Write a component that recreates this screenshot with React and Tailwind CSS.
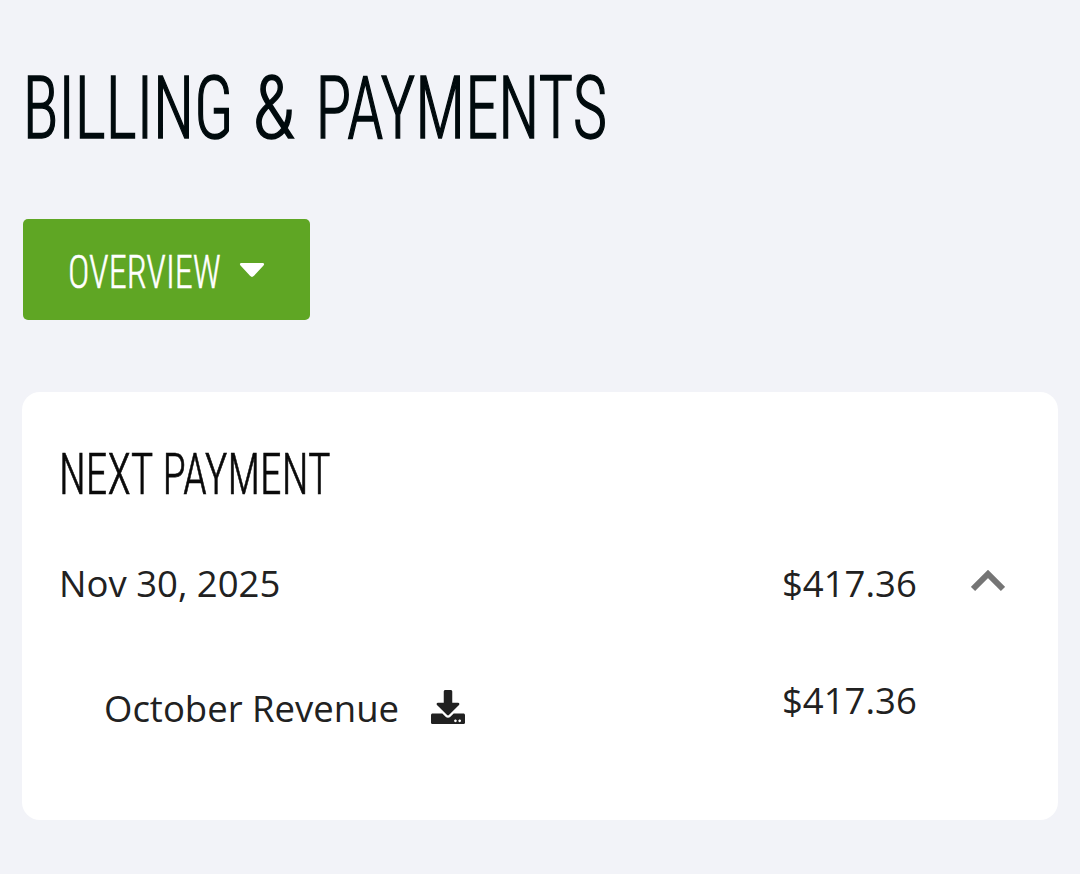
import { FaDownload } from "react-icons/fa";

const payment = {
  date: "Nov 30, 2025",
  total: "$417.36",
  items: [{ name: "October Revenue", amount: "$417.36" }],
};

// Narrow display lettering used for headings and buttons
const CondensedText = ({ children, className }) => (
  <span
    className={`block origin-left whitespace-nowrap font-['Roboto',sans-serif] font-light [font-stretch:75%] ${className}`}
  >
    {children}
  </span>
);

const App = () => {
  return (
    <div className="min-h-screen bg-[#f2f3f8] pt-[62px] px-[22px] font-['Open_Sans',sans-serif] text-[#212121]">
      <h1 className="h-[92px] text-[#000a0d]">
        <CondensedText className="pl-px text-[87px] leading-[92px] [word-spacing:5px] [-webkit-text-stroke:1.5px_currentColor] scale-x-[0.766]">
          BILLING <span className="mr-[11px] inline-block origin-left scale-x-[1.19]">&amp;</span> PAYMENTS
        </CondensedText>
      </h1>

      <button className="mt-[65px] ml-px flex h-[101px] w-[287px] items-center rounded-[5px] bg-[#5fa624] pl-[44px] text-white">
        <div className="w-[172px] pt-[5px] pl-px">
          <CondensedText className="text-[47px] text-left [-webkit-text-stroke:0.5px_currentColor] scale-x-[0.772]">
            OVERVIEW
          </CondensedText>
        </div>
        <svg viewBox="0 0 26 15" className="mt-px h-[15px] w-[26px]" fill="currentColor">
          <path d="M2 0H24Q26 .5 24.500 2.500L15 12.800Q13 15 11 12.800L1.500 2.500Q0 .5 2 0Z" />
        </svg>
      </button>

      <div className="mt-[72px] h-[428px] w-[1036px] rounded-[18px] bg-white px-[38px] pt-[52px]">
        <h2 className="-ml-px h-[60px] text-[#0a0a0a]">
          <CondensedText className="text-[58px] leading-[60px] [-webkit-text-stroke:0.7px_currentColor] scale-x-[0.75]">
            NEXT PAYMENT
          </CondensedText>
        </h2>

        <div className="mt-[53px] flex h-[52px] items-center text-[36.5px]">
          <span className="w-[722px] -ml-px mr-px">{payment.date}</span>
          <span className="w-[189px]">{payment.total}</span>
          <svg viewBox="0 0 34 22" className="-mt-1 h-[22px] w-[34px]" fill="none" stroke="#757575" strokeWidth="6">
            <path d="M2 19 17 4 32 19" />
          </svg>
        </div>

        {payment.items.map((item) => (
          <div key={item.name} className="mt-[65px] flex items-start text-[36.5px] leading-[52px]">
            <div className="flex w-[722px] items-center pt-2 pl-[44px]">
              <span className="mr-8">{item.name}</span>
              <FaDownload size={34} className="-mt-[3px]" />
            </div>
            <span>{item.amount}</span>
          </div>
        ))}
      </div>
    </div>
  );
};

export default App;
